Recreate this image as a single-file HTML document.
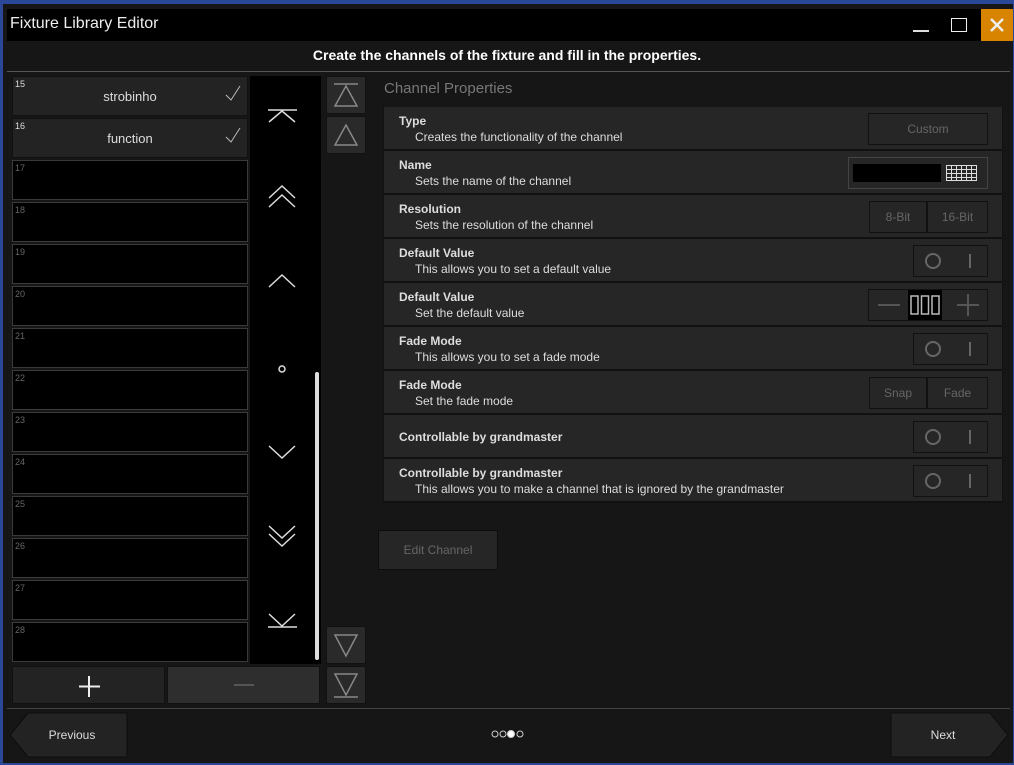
<!DOCTYPE html><html><head><style>
*{box-sizing:border-box;margin:0;padding:0}
body{width:1014px;height:765px;background:#2b4898;font-family:"Liberation Sans",sans-serif;position:relative;overflow:hidden}
.a{position:absolute}
.win{left:3px;top:4px;width:1010px;height:759px;background:#161616}
.tb{left:7px;top:9px;width:974px;height:32px;background:#000;color:#eee;font-size:16px;padding:6px 0 0 3px}
.cls{left:981px;top:9px;width:32px;height:32px;background:#d98400}
.row{left:12px;width:236px;height:40px;background:#000;border:1px solid #3a3a3a}
.row span{position:absolute;left:2px;top:2px;font-size:9px;color:#666}
.rf{background:#232323;border:1px solid #111}
.rf span{color:#ddd}
.rf b{position:absolute;left:0;right:0;top:12px;text-align:center;font-weight:normal;font-size:13px;color:#ddd}
.sb{left:326px;width:40px;height:38px;background:#2a2a2a;border:1px solid #111}
.pr{left:384px;width:618px;height:43px;background:#262626;border-bottom:1px solid #111}
.pr h4{position:absolute;left:15px;top:7px;font-size:12px;color:#ddd}
.pr p{position:absolute;left:31px;top:23px;font-size:12px;color:#ddd}
.btn{position:absolute;border:1px solid #111;background:#262626;color:#666;font-size:12px;text-align:center}
.tg{position:absolute;left:529px;top:6px;width:75px;height:32px;border:1px solid #111;background:#262626}
</style></head><body>
<div class="a win"></div>
<div class="a tb">Fixture Library Editor</div>
<div class="a" style="left:913px;top:30px;width:16px;height:2px;background:#ddd"></div>
<div class="a" style="left:951px;top:18px;width:16px;height:14px;border:1.5px solid #eee"></div>
<div class="a cls"><svg width="32" height="32"><path d="M10 10L22 22M22 10L10 22" stroke="#eee" stroke-width="2.5"/></svg></div>
<div class="a" style="left:0;right:0;top:47px;text-align:center;color:#fff;font-weight:bold;font-size:14px">Create the channels of the fixture and fill in the properties.</div>
<div class="a" style="left:7px;top:71px;width:1003px;height:1px;background:#555"></div>
<div class="a" style="left:250px;top:76px;width:71px;height:588px;background:#000"></div>
<div class="a" style="left:315px;top:372px;width:4px;height:288px;background:#ddd;border-radius:2px"></div>
<svg class="a" style="left:250px;top:76px" width="65" height="588" fill="none" stroke="#ddd" stroke-width="1.5">
<path d="M18 34H47M19 46L32 35L45 46"/><path d="M19 122L32 110L45 122M19 131L32 119L45 131"/><path d="M19 211L32 199L45 211"/><circle cx="32" cy="293" r="3"/><path d="M19 370L32 382L45 370"/><path d="M19 450L32 462L45 450M19 458L32 470L45 458"/><path d="M19 538L32 550L45 538M18 551H47"/></svg>
<div class="a row rf" style="top:76px"><span>15</span><b>strobinho</b><svg class="a" style="right:6px;top:8px" width="16" height="16"><path d="M1 10L6 15L15 1" stroke="#bbb" fill="none"/></svg></div>
<div class="a row rf" style="top:118px"><span>16</span><b>function</b><svg class="a" style="right:6px;top:8px" width="16" height="16"><path d="M1 10L6 15L15 1" stroke="#bbb" fill="none"/></svg></div>
<div class="a row" style="top:160px"><span>17</span></div>
<div class="a row" style="top:202px"><span>18</span></div>
<div class="a row" style="top:244px"><span>19</span></div>
<div class="a row" style="top:286px"><span>20</span></div>
<div class="a row" style="top:328px"><span>21</span></div>
<div class="a row" style="top:370px"><span>22</span></div>
<div class="a row" style="top:412px"><span>23</span></div>
<div class="a row" style="top:454px"><span>24</span></div>
<div class="a row" style="top:496px"><span>25</span></div>
<div class="a row" style="top:538px"><span>26</span></div>
<div class="a row" style="top:580px"><span>27</span></div>
<div class="a row" style="top:622px"><span>28</span></div>
<div class="a" style="left:12px;top:666px;width:153px;height:38px;background:#232323;border:1px solid #111"><svg width="153" height="38"><path d="M76 9V30M66 19.5H87" stroke="#eee" stroke-width="2"/></svg></div>
<div class="a" style="left:167px;top:666px;width:153px;height:38px;background:#2e2e2e;border:1px solid #111"><div style="position:absolute;left:66px;top:17px;width:20px;height:2px;background:#555"></div></div>
<div class="a sb" style="top:76px"><svg width="38" height="36" fill="none" stroke="#888" stroke-width="1.5"><path d="M7 7H31M8 29H30L19 9Z"/></svg></div>
<div class="a sb" style="top:116px"><svg width="38" height="36" fill="none" stroke="#888" stroke-width="1.5"><path d="M8 28H30L19 8Z"/></svg></div>
<div class="a sb" style="top:626px"><svg width="38" height="36" fill="none" stroke="#888" stroke-width="1.5"><path d="M8 8H30L19 29Z"/></svg></div>
<div class="a sb" style="top:666px"><svg width="38" height="36" fill="none" stroke="#888" stroke-width="1.5"><path d="M8 7H30L19 28ZM7 30H31"/></svg></div>
<div class="a" style="left:384px;top:80px;font-size:15px;color:#777">Channel Properties</div>
<div class="a" style="left:383px;top:107px;width:620px;height:396px;background:#111"></div>
<div class="a pr" style="top:107px"><h4>Type</h4><p>Creates the functionality of the channel</p><div class="btn" style="left:484px;top:6px;width:120px;height:32px;line-height:30px">Custom</div></div>
<div class="a pr" style="top:151px"><h4>Name</h4><p>Sets the name of the channel</p><div class="btn" style="left:464px;top:6px;width:140px;height:32px;border-color:#444"><div style="position:absolute;left:4px;top:6px;width:88px;height:18px;background:#000"></div><svg class="a" style="left:96px;top:6px" width="34" height="18" stroke="#ddd" fill="none"><rect x="1.5" y="1.5" width="30" height="15"/><path d="M1 5.5H32M1 9.5H32M1 13.5H32M6.5 1V17M11.5 1V17M16.5 1V17M21.5 1V17M26.5 1V17"/></svg></div></div>
<div class="a pr" style="top:195px"><h4>Resolution</h4><p>Sets the resolution of the channel</p><div class="btn" style="left:485px;top:6px;width:58px;height:32px;line-height:30px">8-Bit</div><div class="btn" style="left:543px;top:6px;width:61px;height:32px;line-height:30px">16-Bit</div></div>
<div class="a pr" style="top:239px"><h4>Default Value</h4><p>This allows you to set a default value</p><div class="tg"><svg width="75" height="32" fill="none" stroke="#666" stroke-width="2"><circle cx="19" cy="15" r="7"/><path d="M56 8V22"/></svg></div></div>
<div class="a pr" style="top:283px"><h4>Default Value</h4><p>Set the default value</p><div class="btn" style="left:484px;top:6px;width:120px;height:32px"><div style="position:absolute;left:39px;top:0;width:34px;height:30px;background:#000"><svg width="34" height="30" fill="none" stroke="#bbb" stroke-width="1.5"><rect x="3" y="6" width="7" height="18"/><rect x="13.5" y="6" width="7" height="18"/><rect x="24" y="6" width="7" height="18"/></svg></div><svg class="a" style="left:0;top:0" width="118" height="30" stroke="#555" stroke-width="2"><path d="M9 15H31M88 15H110M99 4V26"/></svg></div></div>
<div class="a pr" style="top:327px"><h4>Fade Mode</h4><p>This allows you to set a fade mode</p><div class="tg"><svg width="75" height="32" fill="none" stroke="#666" stroke-width="2"><circle cx="19" cy="15" r="7"/><path d="M56 8V22"/></svg></div></div>
<div class="a pr" style="top:371px"><h4>Fade Mode</h4><p>Set the fade mode</p><div class="btn" style="left:485px;top:6px;width:58px;height:32px;line-height:30px">Snap</div><div class="btn" style="left:543px;top:6px;width:61px;height:32px;line-height:30px">Fade</div></div>
<div class="a pr" style="top:415px"><h4 style="top:15px">Controllable by grandmaster</h4><div class="tg"><svg width="75" height="32" fill="none" stroke="#666" stroke-width="2"><circle cx="19" cy="15" r="7"/><path d="M56 8V22"/></svg></div></div>
<div class="a pr" style="top:459px"><h4>Controllable by grandmaster</h4><p>This allows you to make a channel that is ignored by the grandmaster</p><div class="tg"><svg width="75" height="32" fill="none" stroke="#666" stroke-width="2"><circle cx="19" cy="15" r="7"/><path d="M56 8V22"/></svg></div></div>
<div class="btn" style="left:378px;top:530px;width:120px;height:40px;line-height:38px;background:#262626;border-color:#0c0c0c">Edit Channel</div>
<div class="a" style="left:7px;top:708px;width:1003px;height:1px;background:#444"></div>
<svg class="a" style="left:8px;top:712px" width="120" height="46"><path d="M20 1H119V45H20L2 23Z" fill="#232323" stroke="#0c0c0c"/><text x="64" y="27" fill="#ddd" font-size="12" text-anchor="middle" font-family="Liberation Sans">Previous</text></svg>
<svg class="a" style="left:890px;top:712px" width="120" height="46"><path d="M1 1H100L118 23L100 45H1Z" fill="#232323" stroke="#0c0c0c"/><text x="53" y="27" fill="#ddd" font-size="12" text-anchor="middle" font-family="Liberation Sans">Next</text></svg>
<svg class="a" style="left:490px;top:728px" width="40" height="12" fill="none" stroke="#ccc"><circle cx="5" cy="6" r="3"/><circle cx="13" cy="6" r="3"/><circle cx="21" cy="6" r="3.5" fill="#fff"/><circle cx="30" cy="6" r="3"/></svg>
</body></html>
